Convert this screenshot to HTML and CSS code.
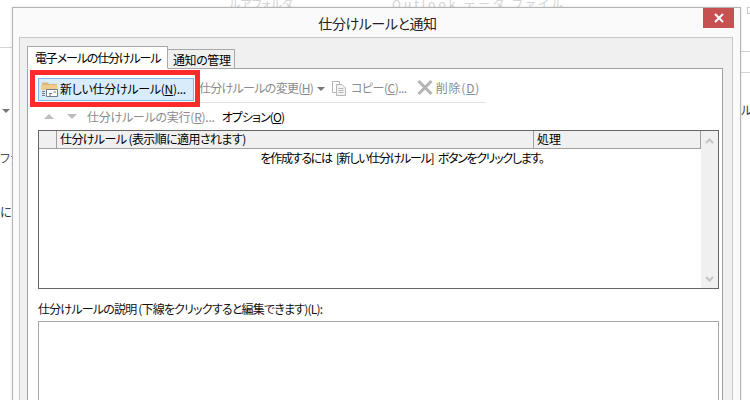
FILE: index.html
```html
<!DOCTYPE html>
<html lang="ja">
<head>
<meta charset="utf-8">
<title>仕分けルールと通知</title>
<link rel="stylesheet" href="styles.css">
</head>
<body>
<div class="desktop">
  <div class="bg-text bg-top">ルアフォルダ</div>
  <div class="bg-text bg-top2">Outlook データ ファイル</div>
  <div class="bg-box"></div>
  <div class="bg-line bg-l1"></div>
  <div class="bg-line bg-r1"></div>
  <div class="bg-line bg-r2"></div>
  <div class="bg-text bg-fa">ファ</div>
  <div class="bg-text bg-ni">に</div>
  <div class="bg-text bg-ru">ル</div>
  <div class="bg-caret"></div>

  <section class="dialog">
    <header class="titlebar">
      <h1 class="title">仕分けルールと通知</h1>
      <button class="close" aria-label="閉じる">
        <svg width="10" height="10" viewBox="0 0 10 10"><path d="M1 1 9 9M9 1 1 9" stroke="#fff" stroke-width="2"/></svg>
      </button>
    </header>
    <div class="panel">
      <div class="tabs">
        <div class="tab active">電子メールの仕分けルール</div>
        <div class="tab second">通知の管理</div>
      </div>
      <div class="tabpage">
        <div class="toolbar">
          <button class="new-rule">
            <svg class="folder" width="17" height="17" viewBox="0 0 17 17">
              <path d="M1 3V1.500H7L8 3H16V7H1Z" fill="#d9b77c"/>
              <path d="M0 4H16V9H0Z" fill="#efca8a"/>
              <path d="M5.500 8.500H16.500V15.500H5.500Z" fill="#fff" stroke="#6f7d89"/>
              <path d="M8 12.500H11M8 14H10M12.500 11H15" stroke="#6f7d89"/>
              <path d="M1 10.500H4M1 12.500H4M1 14.500H4" stroke="#6f7d89"/>
            </svg>
            <span class="new-label">新しい仕分けルール(<u>N</u>)...</span>
          </button>
          <span class="tool change"><span class="change-label">仕分けルールの変更(<u>H</u>)</span><i class="drop"></i></span>
          <span class="tool copy">
            <svg class="copy-icon" width="16" height="16" viewBox="0 0 16 16" fill="none" stroke="#b5b5b5">
              <path d="M1.500 1.500H8.500V4M1.500 1.500V12.500H5"/>
              <path d="M5.500 4.500H11L14.500 8V15.500H5.500Z" fill="#f4f4f4"/>
              <path d="M7.500 8.500H12.500M7.500 10.500H12.500M7.500 12.500H12.500"/>
            </svg>
            <span class="copy-label">コピー(<u>C</u>)...</span>
          </span>
          <span class="tool delete">
            <svg class="delete-icon" width="16" height="15" viewBox="0 0 16 15"><path d="M1.500 1 14.500 14M14.500 1 1.500 14" stroke="#b4b4b4" stroke-width="3"/></svg>
            <span class="delete-label">削除(<u>D</u>)</span>
          </span>
          <div class="highlight"></div>
        </div>
        <div class="subbar">
          <i class="arrow up"></i>
          <i class="arrow down"></i>
          <span class="tool run">仕分けルールの実行(<u>R</u>)...</span>
          <span class="option">オプション(<u>O</u>)</span>
        </div>
        <div class="list">
          <div class="list-main">
            <div class="list-head">
              <div class="col-check"></div>
              <div class="col-rule">仕分けルール (表示順に適用されます)</div>
              <div class="col-action">処理</div>
            </div>
            <div class="list-empty">を作成するには [新しい仕分けルール] ボタンをクリックします。</div>
          </div>
          <div class="scroll">
            <svg width="9" height="6" viewBox="0 0 9 6"><path d="M1 5 4.500 1.500 8 5" fill="none" stroke="#c4c4c4" stroke-width="2"/></svg>
            <svg width="9" height="6" viewBox="0 0 9 6"><path d="M1 1 4.500 4.500 8 1" fill="none" stroke="#c4c4c4" stroke-width="2"/></svg>
          </div>
        </div>
        <label class="desc-label">仕分けルールの説明 (下線をクリックすると編集できます)(L):</label>
        <div class="desc-box"></div>
      </div>
    </div>
  </section>
</div>
</body>
</html>
```
FILE: styles.css
```css
* { box-sizing: border-box; }
html, body { margin: 0; height: 100%; overflow: hidden; }
body { background: #fff; font-family: "Noto Sans CJK JP", "Liberation Sans", sans-serif; font-size: 12px; color: #000; font-feature-settings: "palt"; }
.desktop { position: relative; width: 750px; height: 400px; overflow: hidden; }
.bg-text { position: absolute; color: #555; line-height: 16px; white-space: nowrap; }
.bg-top { left: 229px; top: -4px; color: #d4d4d4; }
.bg-top2 { left: 392px; top: -4px; color: #d4d4d4; letter-spacing: 3px; }
.bg-box { position: absolute; left: 747px; top: 7px; width: 8px; height: 7px; border: 1px solid #c8c8c8; }
.bg-fa { left: 0; top: 150px; width: 12px; overflow: hidden; }
.bg-ni { left: 0; top: 204px; color: #333; }
.bg-ru { left: 741px; top: 102px; color: #333; }
.bg-line { position: absolute; height: 1px; background: #d4d4d4; }
.bg-l1 { left: 0; width: 12px; top: 47px; }
.bg-r1 { left: 741px; width: 9px; top: 51px; }
.bg-r2 { left: 741px; width: 9px; top: 72px; }
.bg-caret { position: absolute; left: 2px; top: 109px; border: 4px solid transparent; border-top-color: #777; border-bottom: 0; }

.dialog { position: absolute; left: 12px; top: 7px; width: 729px; height: 420px; background: #fafafa; border: 1px solid #b4b4b4; box-shadow: 0 0 3px rgba(0,0,0,.12); display: flex; flex-direction: column; }
.titlebar { height: 29px; flex: none; display: flex; justify-content: center; align-items: center; position: relative; }
.title { margin: 0; font-size: 14px; font-weight: 400; line-height: 29px; color: #222; letter-spacing: -.4px; position: relative; left: 1px; top: 1px; }
.close { position: absolute; right: 6px; top: 0; width: 31px; height: 20px; border: 0; padding: 0; background: #c75050; display: flex; align-items: center; justify-content: center; }

.panel { margin: 0 7px 0 6px; flex: 1; background: #f0f0f0; border: 1px solid #c8c8c8; border-bottom: 0; padding: 8px 9px 0 7px; display: flex; flex-direction: column; }
.tabs { display: flex; align-items: flex-end; height: 23px; position: relative; z-index: 1; margin-bottom: -1px; }
.tab { height: 20px; line-height: 19px; padding: 0 3px 0 5px; border: 1px solid #a8a8a8; border-left-width: 0; background: #f0f0f0; font-size: 12px; color: #000; white-space: nowrap; }
.tab.second { letter-spacing: -.4px; }
.tab.active { height: 23px; width: 141px; line-height: 21px; padding-left: 7px; background: #fff; border-left-width: 1px; border-bottom-color: #fff; letter-spacing: -1.15px; }
.tabpage { flex: 1; background: #fff; border: 1px solid #a0a0a0; padding: 0 4px 0 10px; display: flex; flex-direction: column; }

.toolbar { position: relative; margin-left: -8px; width: 456px; height: 34px; padding: 9px 0 0 8px; border-bottom: 1px solid #e2e2e2; display: flex; align-items: flex-start; flex: none; }
.new-rule { width: 156px; height: 23px; border: 1px solid #7db8e8; background: #d9ecfb; padding: 0 0 2px 2px; display: flex; align-items: center; gap: 2px; font: inherit; font-feature-settings: "palt"; color: #000; white-space: nowrap; }
.new-label { letter-spacing: -.3px; }
.folder { position: relative; top: 1px; }
.tool { color: #8b8b8b; white-space: nowrap; line-height: 23px; display: inline-flex; align-items: center; }
.change-label, .copy-label, .delete-label { position: relative; top: -2px; }
.copy-icon, .delete-icon { position: relative; top: -2px; }
.change { margin-left: 5px; }
.change-label { letter-spacing: -.7px; }
.drop { display: block; margin-left: 4px; border: 4px solid transparent; border-top-color: #777; border-bottom: 0; position: relative; top: -1px; }
.copy { margin-left: 6px; gap: 4px; }
.copy-label { letter-spacing: -.5px; }
.delete { margin-left: 10px; gap: 3px; }
.delete-label { letter-spacing: .8px; }
.highlight { position: absolute; left: 0; top: 1px; width: 170px; height: 37px; border: 5px solid #ff2a2a; pointer-events: none; }

.subbar { height: 27px; flex: none; display: flex; align-items: center; padding-left: 6px; }
.arrow { display: block; border: 5px solid transparent; }
.arrow.up { border-top: 0; border-bottom-color: #bdbdbd; }
.arrow.down { margin-left: 13px; border-bottom: 0; border-top-color: #bdbdbd; }
.run { margin-left: 10px; letter-spacing: -.25px; }
.option { margin-left: 7px; color: #000; white-space: nowrap; letter-spacing: -.9px; }

.list { height: 159px; flex: none; width: 681px; border: 1px solid #666; display: flex; }
.list-main { flex: 1; display: flex; flex-direction: column; }
.list-head { height: 18px; background: #f0f0f0; border-bottom: 1px solid #a0a0a0; border-right: 1px solid #a0a0a0; display: flex; line-height: 16px; }
.col-check { width: 18px; border-right: 1px solid #a0a0a0; }
.col-rule { width: 477px; padding-left: 3px; border-right: 1px solid #a0a0a0; white-space: nowrap; letter-spacing: -.6px; }
.col-action { padding-left: 3px; }
.list-empty { text-align: center; line-height: 18px; padding-left: 64px; white-space: nowrap; letter-spacing: -1.3px; word-spacing: 3px; }
.scroll { width: 17px; background: #f0f0f0; display: flex; flex-direction: column; justify-content: space-between; align-items: center; padding: 7px 0 6px; }

.desc-label { display: block; margin-top: 11px; line-height: 18px; height: 21px; white-space: nowrap; color: #111; letter-spacing: -.8px; }
.desc-box { height: 120px; width: 681px; flex: none; border: 1px solid #a8a8a8; background: #fff; }
```
